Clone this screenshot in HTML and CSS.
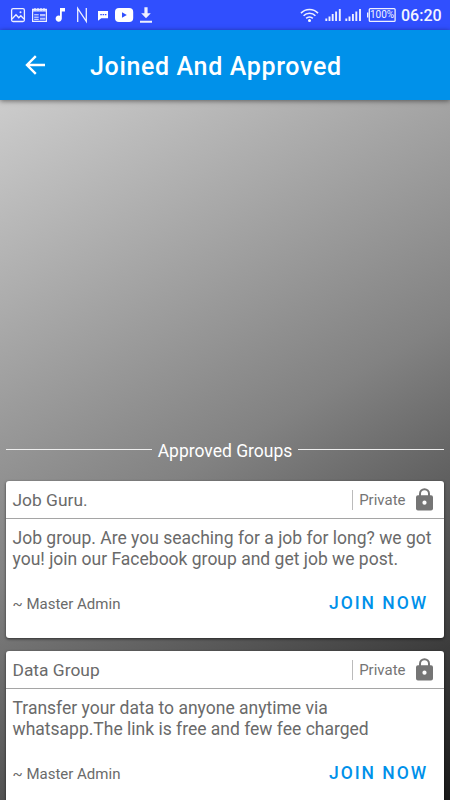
FILE: index.html
```html
<!DOCTYPE html>
<html lang="en">
<head>
<meta charset="utf-8">
<title>Joined And Approved</title>
<link rel="stylesheet" href="styles.css">
</head>
<body>
<div class="screen">
  <div class="status">
    <svg class="status-icons" width="160" height="30" viewBox="0 0 160 30" fill="none" stroke="#eef0ff">
      <rect x="11.6" y="8.7" width="12.8" height="12.8" rx="1.5" stroke-width="1.3"/>
      <path d="M12 19l4-4.2 2.8 2.9 2-2 3.2 3.3" stroke-width="1.3"/>
      <circle cx="20.5" cy="12.3" r="1" fill="#eef0ff" stroke="none"/>
      <path d="M32.6 9.3h13.8v12.1H32.6z" stroke-width="1.2"/>
      <path d="M32 10.8h15M35 8v3M38 8v3M41 8v3M44 8v3" stroke-width="1.2"/>
      <path d="M34.2 14.8h4.5M34.2 17.2h4.5M34.2 19.3h4.5" stroke-width="1"/>
      <path d="M40 14h5.3v2.3H40zM40 17.8h5.3v2H40z" fill="#b9c2ff" stroke="none"/>
      <path d="M60 8h5v3.6h-3.2v7a3.1 3.1 0 1 1-1.8-2.8z" fill="#fff" stroke="none"/>
      <path d="M77.7 22V8.5l8.6 12.8V8" stroke-width="1.3"/>
      <path d="M98 11h10v7.2h-6.7L98 20.8z" fill="#fff" stroke="none"/>
      <path d="M100.3 14.7h1.5M102.6 14.7h1.5M104.9 14.7h1.5" stroke="#304ffe" stroke-width="1.3"/>
      <rect x="115" y="8" width="18.2" height="14" rx="4" fill="#fff" stroke="none"/>
      <path d="M122 12.2l4.8 2.8-4.8 2.8z" fill="#304ffe" stroke="none"/>
      <path d="M144.4 7.3h3.2v6h3.2L146 18.2l-4.8-4.9h3.2zM140 20.7h12v2h-12z" fill="#eef0ff" stroke="none"/>
    </svg>
    <svg class="status-icons" width="90" height="30" viewBox="300 0 90 30" fill="none" stroke="#eef0ff">
      <path d="M301 13.1a11.7 11.7 0 0 1 17 0M303.6 15.8a8 8 0 0 1 11.8 0M306.2 18.4a4.6 4.6 0 0 1 6.6 0" stroke-width="1.6"/>
      <circle cx="309.5" cy="20.5" r="1.5" fill="#fff" stroke="none"/>
      <path d="M326.3 21v-2.5M329.5 21v-4.6M332.7 21v-7M336.1 21v-9.5M339.8 21V9M346.3 21v-2.5M349.5 21v-4.6M352.9 21v-7M356.3 21v-9.5M360 21V9" stroke-width="1.9"/>
      <rect x="369.3" y="8.6" width="25.8" height="12.8" rx="1" stroke-width="1.3"/>
      <path d="M367.7 12.5v5" stroke-width="1.4"/>
    </svg>
    <div class="battery">100%</div>
    <div class="clock">06:20</div>
  </div>
  <header class="bar">
    <svg width="22" height="22" viewBox="0 0 22 22" fill="none" stroke="#fff" stroke-width="2.4"><path d="M21 11H3M11.8 2.2L3 11l8.8 8.8"/></svg>
    <h1>Joined And Approved</h1>
  </header>
  <main class="content">
    <div class="divider"><span>Approved Groups</span></div>
    <article class="card">
      <div class="card-head">
        <h2>Job Guru.</h2>
        <div class="privacy">Private</div>
        <svg class="lock" width="17" height="23" viewBox="0 0 17 23"><path d="M4 8V5.7a4.5 4.5 0 0 1 9 0V8" fill="none" stroke="#757575" stroke-width="2"/><path fill="#757575" fill-rule="evenodd" d="M2 7.2h13a2 2 0 0 1 2 2V20.5a2 2 0 0 1-2 2H2a2 2 0 0 1-2-2V9.2a2 2 0 0 1 2-2zm6.5 5.4a2.1 2.1 0 1 0 0 4.2 2.1 2.1 0 0 0 0-4.2z"/></svg>
      </div>
      <p>Job group. Are you seaching for a job for long? we got<br>you! join our Facebook group and get job we post.</p>
      <div class="card-foot"><span>~ Master Admin</span><button>JOIN NOW</button></div>
    </article>
    <article class="card">
      <div class="card-head">
        <h2>Data Group</h2>
        <div class="privacy">Private</div>
        <svg class="lock" width="17" height="23" viewBox="0 0 17 23"><path d="M4 8V5.7a4.5 4.5 0 0 1 9 0V8" fill="none" stroke="#757575" stroke-width="2"/><path fill="#757575" fill-rule="evenodd" d="M2 7.2h13a2 2 0 0 1 2 2V20.5a2 2 0 0 1-2 2H2a2 2 0 0 1-2-2V9.2a2 2 0 0 1 2-2zm6.5 5.4a2.1 2.1 0 1 0 0 4.2 2.1 2.1 0 0 0 0-4.2z"/></svg>
      </div>
      <p>Transfer your data to anyone anytime via<br>whatsapp.The link is free and few fee charged</p>
      <div class="card-foot"><span>~ Master Admin</span><button>JOIN NOW</button></div>
    </article>
  </main>
</div>
</body>
</html>
```
FILE: styles.css
```css
* { box-sizing: border-box; }
body { margin: 0; font-family: Roboto, sans-serif; color: #6a6a6a; }
h1, h2, p { margin: 0; font-weight: 400; }
.screen { width: 450px; height: 800px; overflow: hidden; display: flex; flex-direction: column; }
.status { height: 30px; flex: none; display: flex; background: #304ffe; color: #f4f5ff; }
.status-icons { flex: none; overflow: visible; }
.status-icons + .status-icons { margin-left: 140px; }
.battery { width: 26px; height: 13px; margin: 8px 0 0 -21px; font-size: 10px; line-height: 14px; text-align: center; white-space: nowrap; }
.clock { margin-left: 6px; font-size: 16px; line-height: 31px; font-weight: 500; }
.bar { height: 70px; flex: none; display: flex; align-items: center; padding-left: 24px; background: #0091ea; color: #fff; box-shadow: 0 1px 5px rgba(0,0,0,.5); position: relative; z-index: 1; }
.bar h1 { margin: 3px 0 0 44px; font-size: 25px; font-weight: 500; letter-spacing: .65px; white-space: nowrap; }
.content { flex: 1; min-height: 0; padding: 340px 6px 0; background: linear-gradient(150deg, #ccc, #828282 50%, #1a1a1a); }
.divider { height: 21px; display: flex; align-items: center; gap: 6px; margin-bottom: 20px; color: #fff; font-size: 17.5px; white-space: nowrap; }
.divider::before, .divider::after { content: ""; flex: 1; height: 1px; background: #eee; margin-bottom: 2px; }
.card { height: 157px; margin-bottom: 13px; background: #fff; border-radius: 3px; box-shadow: 0 1px 3px rgba(0,0,0,.6); }
.card-head { height: 38px; display: flex; align-items: center; padding: 0 11px 0 6.5px; border-bottom: 1px solid #a5a5a5; }
.card-head h2 { flex: 1; font-size: 17.4px; padding-top: 1px; }
.privacy { height: 20px; line-height: 21px; padding-left: 6px; border-left: 1px solid #bbb; font-size: 15px; color: #757575; }
.lock { margin-left: 10.5px; }
.card p { padding: 9px 6.5px 0; font-size: 17.5px; line-height: 20.5px; white-space: nowrap; }
.card-foot { display: flex; justify-content: space-between; align-items: center; padding: 0 16px 0 6.5px; margin-top: 24px; height: 22px; font-size: 15px; }
.card-foot button { padding: 0 0 2px; border: 0; background: none; color: #0091ea; font: 500 17.5px Roboto, sans-serif; letter-spacing: 1.95px; }
```
